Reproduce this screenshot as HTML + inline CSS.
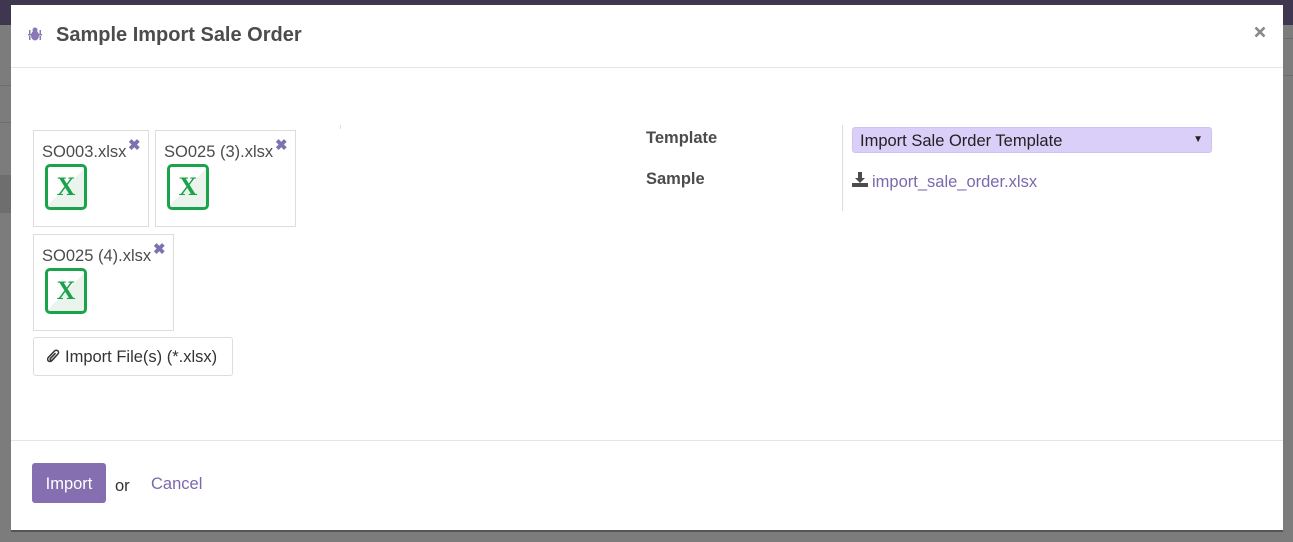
<!DOCTYPE html>
<html><head><meta charset="utf-8"><style>
body{margin:0;width:1293px;height:542px;background:#7c7c7c;position:relative;overflow:hidden;font-family:"Liberation Sans",sans-serif;color:#4c4c4c}
.top{position:absolute;left:0;top:0;width:1293px;height:25px;background:#3f3650}
.ln{position:absolute;height:1px;background:#6d6d6d}
.modal{position:absolute;left:11px;top:5px;width:1272px;height:525px;background:#fff;border-bottom:2px solid #555;box-sizing:content-box}
.abs{position:absolute}
.box{position:absolute;border:1px solid #ddd;background:#fff}
.fn{position:absolute;left:8px;top:12px;font-size:16.5px;color:#4c4c4c;white-space:nowrap}
.x{position:absolute;color:#7f70b0;font-size:15px;font-weight:bold}
.xl{position:absolute;left:11px;top:33px;width:42px;height:46px;border:3px solid #1aa34a;border-radius:5px;box-sizing:border-box;background:linear-gradient(135deg,#fff 50%,#eaf4ec 50%);color:#1aa34a;font-family:"Liberation Serif",serif;font-weight:bold;font-size:26px;text-align:center;line-height:40px}
</style></head><body>
<div class="top"></div>
<div class="ln" style="left:0;top:85px;width:11px"></div>
<div class="ln" style="left:0;top:122px;width:11px"></div>
<div class="ln" style="left:0;top:175px;width:11px;height:38px;background:#6e6e6e"></div>
<div class="ln" style="left:1283px;top:38px;width:10px"></div>
<div class="ln" style="left:1283px;top:75px;width:10px"></div>
<div class="modal">
 <svg class="abs" style="left:17px;top:22px" width="14" height="14" viewBox="0 0 14 14"><g fill="#8a78b5"><ellipse cx="7" cy="8.5" rx="4" ry="5"/><circle cx="7" cy="3" r="2.5"/><rect x="0" y="7" width="14" height="1.5"/><rect x="1" y="3" width="1.5" height="4"/><rect x="11.5" y="3" width="1.5" height="4"/><rect x="1" y="9" width="1.5" height="4"/><rect x="11.5" y="9" width="1.5" height="4"/></g></svg>
 <div class="abs" style="left:45px;top:19px;font-size:20px;font-weight:bold;color:#4c4c4c">Sample Import Sale Order</div>
 <svg class="abs" style="left:1243px;top:21px" width="12" height="12" viewBox="0 0 12 12"><path d="M1.5 1.5L10.5 10.5M10.5 1.5L1.5 10.5" stroke="#888" stroke-width="2.6"/></svg>
 <div class="abs" style="left:0;top:62px;width:1272px;height:1px;background:#e5e5e5"></div>
 <div class="abs" style="left:329px;top:120px;width:1px;height:4px;background:#ddd"></div>
 <div class="box" style="left:22px;top:125px;width:114px;height:95px"><div class="fn">SO003.xlsx</div><div class="x" style="left:94px;top:5px">✖</div><div class="xl">X</div></div>
 <div class="box" style="left:144px;top:125px;width:139px;height:95px"><div class="fn">SO025 (3).xlsx</div><div class="x" style="left:119px;top:5px">✖</div><div class="xl">X</div></div>
 <div class="box" style="left:22px;top:229px;width:139px;height:95px"><div class="fn">SO025 (4).xlsx</div><div class="x" style="left:119px;top:5px">✖</div><div class="xl">X</div></div>
 <div class="box" style="left:22px;top:332px;width:198px;height:37px;border-radius:3px;font-size:16.5px;color:#333">
  <svg style="position:absolute;left:13px;top:11px" width="13" height="15" viewBox="0 0 13 15"><path d="M10 6L5 11.5C3.8 12.8 2 12.8 1.2 11.8 0.3 10.8 0.5 9.3 1.6 8.2L7.5 2C8.5 1 10 1 10.9 1.9 11.8 2.8 11.7 4.2 10.8 5.1L5.2 11C4.6 11.6 3.8 11.6 3.4 11.1 3 10.6 3.1 9.9 3.6 9.3L8.5 4.2" fill="none" stroke="#333" stroke-width="1.5"/></svg>
  <span style="position:absolute;left:31px;top:10px">Import File(s) (*.xlsx)</span></div>
 <div class="abs" style="left:635px;top:124px;font-size:16.5px;font-weight:bold">Template</div>
 <div class="abs" style="left:635px;top:165px;font-size:16.5px;font-weight:bold">Sample</div>
 <div class="abs" style="left:831px;top:120px;width:1px;height:86px;background:#ddd"></div>
 <div class="abs" style="left:841px;top:122px;width:360px;height:26px;background:#d9cff8;border:1px solid #cdc3ec;border-radius:3px;box-sizing:border-box;font-size:16.5px;color:#222"><span style="position:absolute;left:7px;top:4px">Import Sale Order Template</span><span style="position:absolute;right:8px;top:6px;font-size:10px">▼</span></div>
 <svg class="abs" style="left:841px;top:167px" width="16" height="15" viewBox="0 0 16 15"><g fill="#4c4c4c"><rect x="6" y="0" width="4" height="6"/><polygon points="3,6 13,6 8,11"/><rect x="0" y="11" width="16" height="4"/></g></svg>
 <div class="abs" style="left:861px;top:168px;font-size:16.5px;color:#7c68ad">import_sale_order.xlsx</div>
 <div class="abs" style="left:0;top:435px;width:1272px;height:1px;background:#e5e5e5"></div>
 <div class="abs" style="left:21px;top:458px;width:74px;height:40px;background:#856fb0;border-radius:3px;color:#fff;font-size:16.5px;text-align:center;line-height:42px">Import</div>
 <div class="abs" style="left:104px;top:472px;font-size:16.5px;color:#333">or</div>
 <div class="abs" style="left:140px;top:470px;font-size:16.5px;color:#7c68ad">Cancel</div>
</div>
</body></html>
